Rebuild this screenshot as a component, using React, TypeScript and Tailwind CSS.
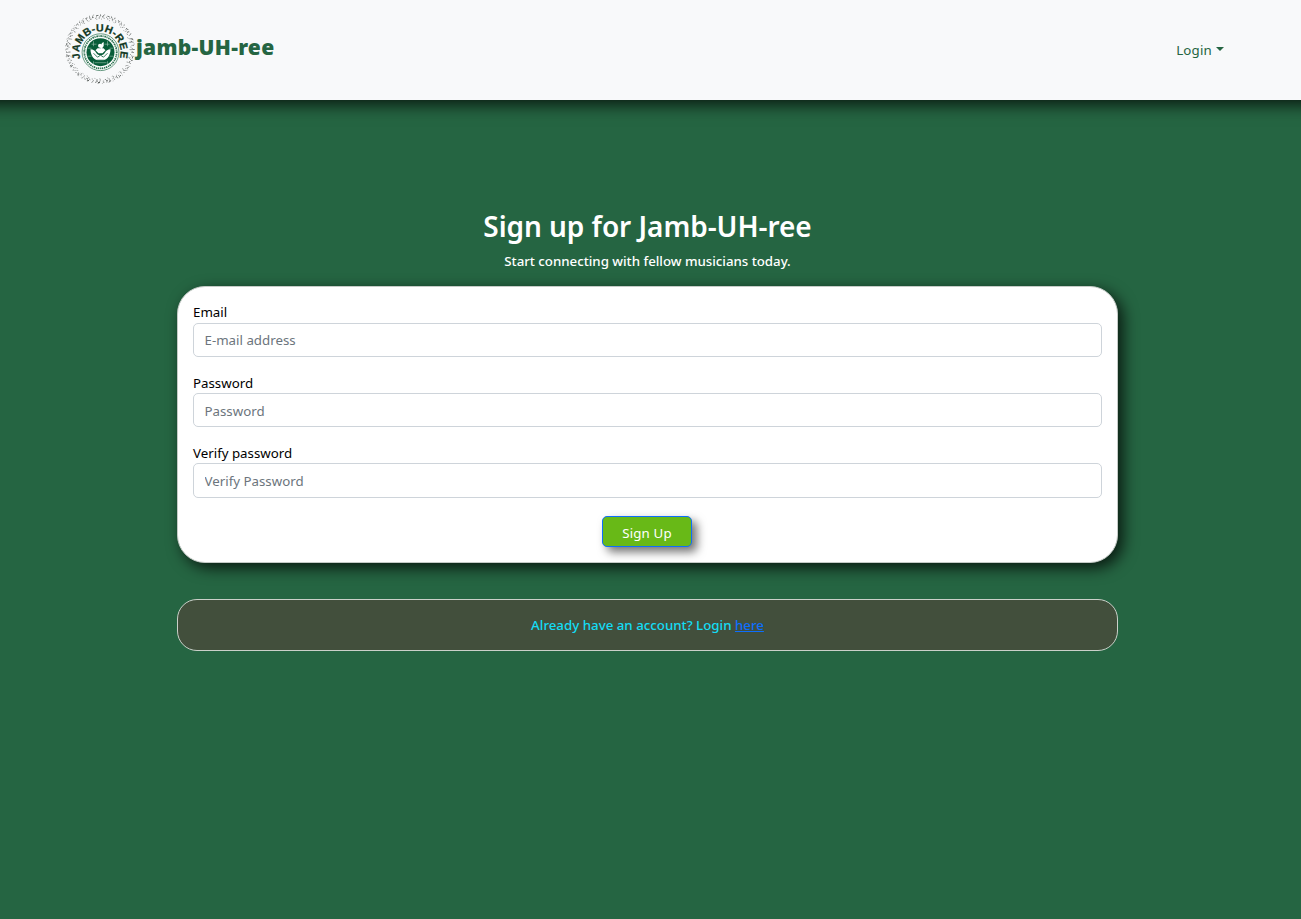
import React from "react";

function Logo() {
  return (
    <svg viewBox="-35 -35 70 70" className="block h-[70px] w-[70px] shrink-0" aria-label="jamb-UH-ree logo">
      <defs>
        <path id="arc" d="M-19.6 9.5 A20.6 20.6 0 1 1 19.6 9.5" />
      </defs>
      <g fill="none" stroke="#4b504e">
        <circle r="33.6" strokeWidth="1" strokeDasharray="1 2.2 .8 3.5 2 1.8" />
        <circle r="32.3" strokeWidth="1" strokeDasharray=".8 1.7 1.5 2.6 .7 2.8" />
        <circle r="31" strokeWidth="1" strokeDasharray="1.2 3.9 .8 2.6" opacity=".8" />
        <circle r="29.9" strokeWidth=".8" strokeDasharray=".8 7.1 1 4" opacity=".7" />
        <circle r="34.5" strokeWidth=".8" strokeDasharray="1 6 .7 3.4" opacity=".7" />
      </g>
      <text fontFamily="Liberation Sans, sans-serif" fontWeight="700" fontSize="10.6" fill="#123823" stroke="#123823" strokeWidth=".25">
        <textPath href="#arc" startOffset="0" textLength="76.5" lengthAdjust="spacing">JAMB-UH-REE</textPath>
      </text>
      <g transform="translate(.5 3.2)">
        <circle r="18.4" fill="#fff" stroke="#438263" strokeWidth=".8" />
        <circle r="16.2" fill="none" stroke="#2f7352" strokeWidth="1.8" strokeDasharray="1.1 .8 1.6 .6" />
        <circle r="14" fill="#075c38" />
        <g fill="#fff">
          <circle cx="-.5" cy="-6.4" r="2" />
          <path d="m-.5-5 2-4.3 1.7-.8v4L1-3Z" />
          <path d="M-10-3c3 0 4 1 6 4 2 2.7 6 2.7 8 0 2-3 3-4 6-4 0 6-3 10-7 11h-6c-4-1-7-5-7-11Z" />
          <path d="m-5-2 2-2h6l2 2-3 3h-4Z" />
        </g>
        <path d="M-7 1-3 5 0 3 3 5 7 1M-4 8h8" fill="none" stroke="#075c38" strokeWidth=".8" />
        <path d="M-13-4h4M9-4h4M-13 4h4M9 4h4M-7-11v5M7-11v5M-7 9v3M7 9v3M-6 10.5H6M-9-8h5M4-8h5" stroke="#b5d3c3" strokeWidth=".5" />
      </g>
    </svg>
  );
}

function Field({ label, placeholder, type }: { label: string; placeholder: string; type: string }) {
  return (
    <label className="group block h-[70px] text-black">
      <span className="block h-[21px] leading-[21px] group-[:not(:first-child)]:pt-px">{label}</span>
      <input
        type={type}
        placeholder={placeholder}
        className="block h-[34px] w-full rounded-[5px] border border-[#ced4da] bg-white px-[10.5px] outline-none group-[:not(:first-child)]:pt-[2px] group-[:nth-child(3)]:h-[35px] group-[:nth-child(3)]:pt-px placeholder:text-[#6c757d]"
      />
    </label>
  );
}

export default function App() {
  return (
    <div className="min-h-screen overflow-x-hidden bg-[#256542] font-['Noto_Sans',sans-serif] text-[13.3px] text-white">
      <header className="-mx-5 flex h-[100px] items-start justify-between bg-[#f8f9fa] pr-[97px] pl-[85px] text-[#256542] shadow-[0_5px_15px_rgba(0,0,0,0.75)]">
        <a href="#" className="flex pt-[14px]">
          <Logo />
          <span className="pt-[18px] pl-px text-[21px] leading-[30px] font-black tracking-[0.3px] whitespace-nowrap">jamb-UH-ree</span>
        </a>
        <button className="mt-[40px] flex items-center gap-1 leading-[21px] tracking-[0.2px]">
          Login
          <span className="-mt-[4px] border-x-4 border-t-4 border-x-transparent border-t-[#256542]" />
        </button>
      </header>
      <main className="mx-auto w-[941px] -translate-x-[3px] pt-[106px]">
        <h1 className="h-[45px] text-center text-[28px] leading-[40px] font-semibold tracking-[-0.05px]">Sign up for Jamb-UH-ree</h1>
        <p className="h-[35px] text-center leading-[21px] font-medium tracking-[-0.02px]">Start connecting with fellow musicians today.</p>
        <form className="h-[277px] rounded-[28px] border border-[#c5cbc7] bg-white px-[15px] pt-[15px] shadow-[5px_5px_15px_rgba(0,0,0,0.75)]">
          <Field label="Email" placeholder="E-mail address" type="email" />
          <Field label="Password" placeholder="Password" type="password" />
          <Field label="Verify password" placeholder="Verify Password" type="password" />
          <button type="button" className="mx-auto mt-[4px] block h-[31px] w-[90px] -translate-x-px rounded-[5px] border border-[#0d6efd] bg-[#68b917] pt-[3px] pl-px leading-[21px] tracking-[0.15px] text-white shadow-[5px_5px_10px_rgba(0,0,0,0.55)]">Sign Up</button>
        </form>
        <section className="mt-[36px] h-[52px] rounded-[20px] border border-[#cad0c9] bg-[#424f3c] text-center leading-[50px] font-medium text-[#14dcf4]">
          Already have an account? Login <a href="#" className="text-[#0d6efd] underline">here</a>
        </section>
      </main>
    </div>
  );
}
